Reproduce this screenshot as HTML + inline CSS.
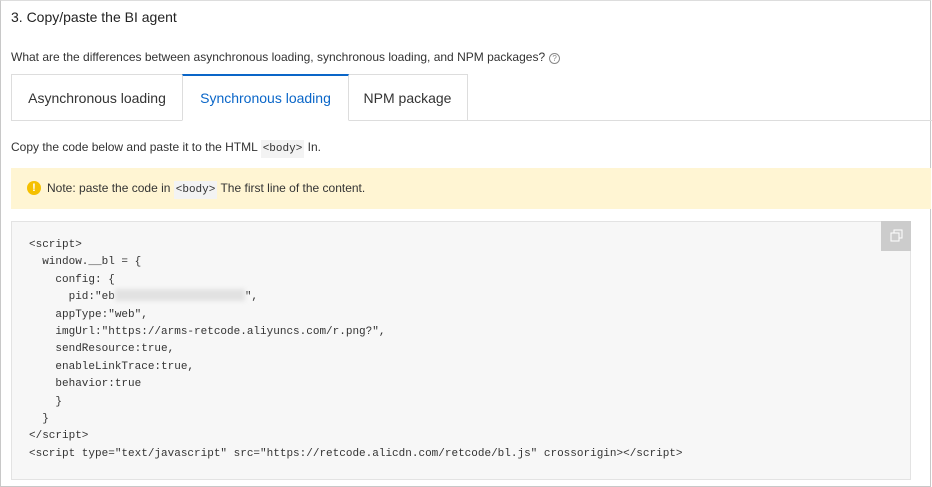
<!DOCTYPE html>
<html><head><meta charset="utf-8"><style>
*{box-sizing:border-box;margin:0;padding:0}
body{width:932px;height:487px;background:#fff;font-family:"Liberation Sans",sans-serif;color:#333;position:relative;overflow:hidden}
.frame{position:absolute;left:0;top:0;width:931px;height:487px;border:1px solid #c8c8c8;border-top:1px solid #ddd}
.abs{position:absolute;white-space:nowrap}
.h{left:11px;top:9px;font-size:14px;color:#222}
.q{left:11px;top:50px;font-size:12px;color:#333}
.qi{display:inline-block;width:11px;height:11px;border:1px solid #888;border-radius:50%;font-size:8px;line-height:9px;text-align:center;color:#888;vertical-align:0;margin-left:4px}
.tabs{position:absolute;left:11px;top:74px;right:0;height:47px;border-bottom:1px solid #ddd}
.tab{position:absolute;top:0;height:47px;border:1px solid #ddd;background:#fff;font-size:14px;line-height:46px;text-align:center;color:#333}
.tab.a{border-top:2px solid #0a66c8;color:#0a66c8;border-bottom:1px solid #fff;height:47px;line-height:44px}
code{font-family:"Liberation Mono",monospace;font-size:11px;background:#f3f3f3;padding:3px 2px}
.p{left:11px;top:140px;font-size:12px}
.note{position:absolute;left:11px;top:168px;width:920px;height:41px;background:#fff5d3;font-size:12px;line-height:41px;padding-left:36px}
.ic{position:absolute;left:16px;top:13px;width:14px;height:14px;border-radius:50%;background:#f5c000;color:#fff;font-size:11px;font-weight:bold;line-height:14px;text-align:center}
.code{position:absolute;left:11px;top:221px;width:900px;height:259px;background:#f7f7f7;border:1px solid #e3e3e3}
pre{position:absolute;left:17px;top:15px;font-family:"Liberation Mono",monospace;font-size:11px;line-height:17.4px;color:#333}
.copy{position:absolute;right:-1px;top:-1px;width:30px;height:30px;background:#ccc}
.blur{display:inline-block;width:130px;height:12px;background:#e2e2e2;filter:blur(2px);vertical-align:-2px}
</style></head><body>
<div class="frame"></div>
<div class="abs h">3. Copy/paste the BI agent</div>
<div class="abs q">What are the differences between asynchronous loading, synchronous loading, and NPM packages?<span class="qi">?</span></div>
<div class="tabs">
<div class="tab" style="left:0;width:172px">Asynchronous loading</div>
<div class="tab" style="left:336px;width:121px">NPM package</div>
<div class="tab a" style="left:171px;width:167px">Synchronous loading</div>
</div>
<div class="abs p">Copy the code below and paste it to the HTML <code>&lt;body&gt;</code> In.</div>
<div class="note"><span class="ic">!</span>Note: paste the code in <code>&lt;body&gt;</code> The first line of the content.</div>
<div class="code">
<pre>&lt;script&gt;
  window.__bl = {
    config: {
      pid:"eb<span class="blur"></span>",
    appType:"web",
    imgUrl:"https://arms-retcode.aliyuncs.com/r.png?",
    sendResource:true,
    enableLinkTrace:true,
    behavior:true
    }
  }
&lt;/script&gt;
&lt;script type="text/javascript" src="https://retcode.alicdn.com/retcode/bl.js" crossorigin&gt;&lt;/script&gt;</pre>
<div class="copy"><svg width="30" height="30"><rect x="13" y="9" width="8" height="8" fill="none" stroke="#fff" stroke-width="1"/><rect x="10" y="12" width="8" height="8" fill="#ccc" stroke="#fff" stroke-width="1"/></svg></div>
</div>
</body></html>
